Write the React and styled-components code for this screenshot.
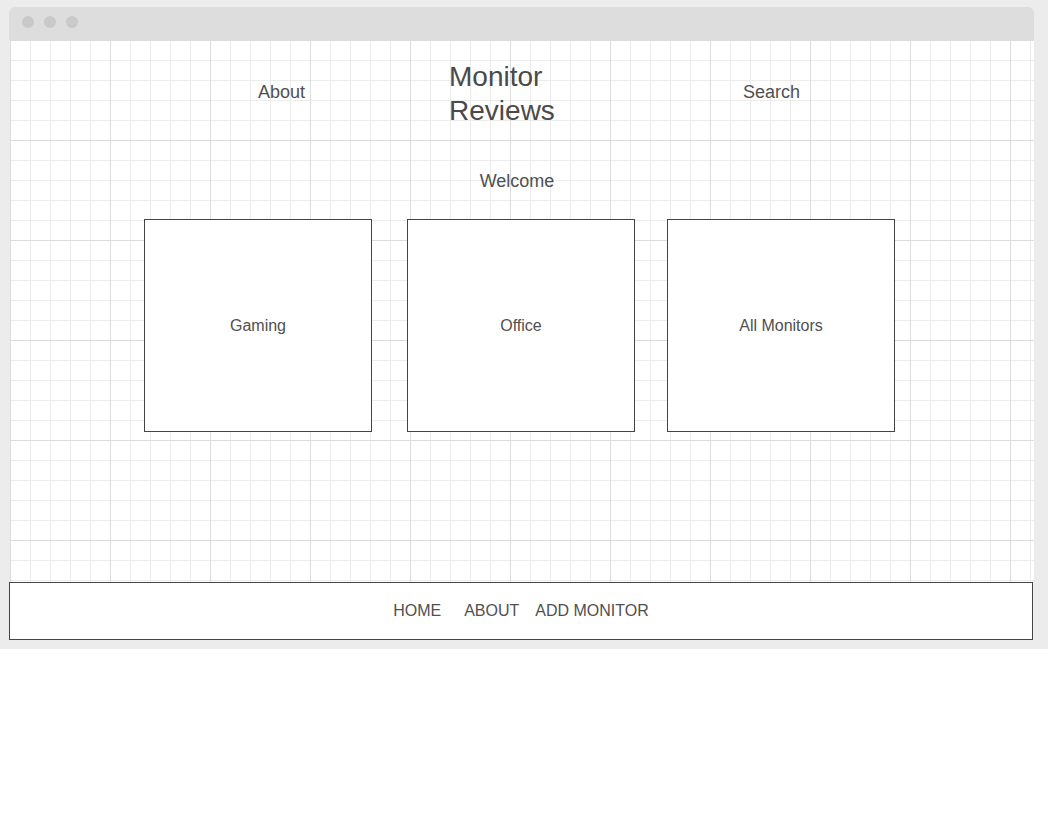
import React from "react";
import styled, { createGlobalStyle } from "styled-components";

const GlobalStyle = createGlobalStyle`
  body {
    margin: 0;
    background: #ffffff;
    font-family: "Liberation Sans", Arial, sans-serif;
  }
`;

const Page = styled.div`
  width: 1048px;
  box-sizing: border-box;
  background: #ececec;
  padding: 7px 13px 9px 9px;
`;

const Window = styled.div`
  width: 1025px;
  display: flex;
  flex-direction: column;
`;

const TitleBar = styled.div`
  height: 33px;
  box-sizing: border-box;
  background: #dddddd;
  border-radius: 6px 6px 0 0;
  display: flex;
  align-items: flex-start;
  gap: 10px;
  padding: 9px 0 0 13px;
`;

const Dot = styled.span`
  width: 12px;
  height: 12px;
  border-radius: 50%;
  background: #c9c9c9;
`;

const Canvas = styled.div`
  height: 542px;
  margin-left: 1px;
  background-color: #ffffff;
  background-image:
    linear-gradient(to right, #dcdcdc 1px, transparent 1px),
    linear-gradient(to bottom, #dcdcdc 1px, transparent 1px),
    linear-gradient(to right, #ececec 1px, transparent 1px),
    linear-gradient(to bottom, #ececec 1px, transparent 1px);
  background-size: 100px 100px, 100px 100px, 20px 20px, 20px 20px;
  background-position: 0 0;
  color: #505050;
  display: flex;
  flex-direction: column;
`;

const Header = styled.header`
  display: flex;
  align-items: center;
  padding-top: 19px;
  height: 68px;
`;

const HeaderLink = styled.a`
  font-size: 18px;
  color: #505050;
  text-decoration: none;
  margin-left: ${(props) => props.offset}px;
  margin-top: -2px;
`;

const SiteTitle = styled.h1`
  margin: 0 0 0 ${(props) => props.offset}px;
  padding-top: 1px;
  width: 110px;
  font-size: 28px;
  line-height: 34px;
  font-weight: normal;
  color: #4a4a4a;
`;

const Welcome = styled.h2`
  margin: 44px 0 0;
  text-align: center;
  font-size: 18px;
  line-height: 21px;
  font-weight: normal;
  color: #505050;
  padding-right: 10px;
`;

const CardRow = styled.div`
  display: flex;
  padding-left: 134px;
  margin-top: 27px;
`;

const Card = styled.div`
  width: 228px;
  height: 213px;
  box-sizing: border-box;
  margin-left: ${(props) => props.gap || 0}px;
  border: 1px solid #444444;
  background: #ffffff;
  display: flex;
  align-items: center;
  justify-content: center;
  font-size: 16px;
  color: #505050;
`;

const Footer = styled.nav`
  width: 1024px;
  height: 58px;
  box-sizing: border-box;
  border: 1px solid #444444;
  background: #ffffff;
  display: flex;
  align-items: center;
  justify-content: center;
`;

const NavLink = styled.a`
  font-size: 16px;
  color: #505050;
  text-decoration: none;
  margin-right: ${(props) => props.space || 0}px;
`;

export default function App() {
  return (
    <>
      <GlobalStyle />
      <Page>
        <Window>
          <TitleBar>
            <Dot />
            <Dot />
            <Dot />
          </TitleBar>
          <Canvas>
            <Header>
              <HeaderLink offset={248}>About</HeaderLink>
              <SiteTitle offset={144}>Monitor Reviews</SiteTitle>
              <HeaderLink offset={184}>Search</HeaderLink>
            </Header>
            <Welcome>Welcome</Welcome>
            <CardRow>
              <Card>Gaming</Card>
              <Card gap={35}>Office</Card>
              <Card gap={32}>All Monitors</Card>
            </CardRow>
          </Canvas>
          <Footer>
            <NavLink space={23}>HOME</NavLink>
            <NavLink space={16}>ABOUT</NavLink>
            <NavLink>ADD MONITOR</NavLink>
          </Footer>
        </Window>
      </Page>
    </>
  );
}
